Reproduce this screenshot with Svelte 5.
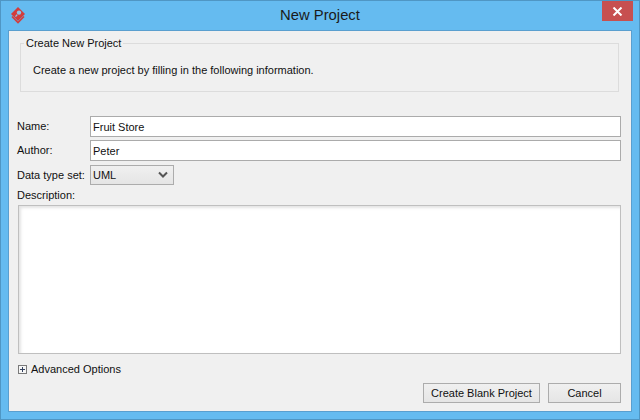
<script>
  let name = 'Fruit Store';
  let author = 'Peter';
</script>

<div class="window">
  <header class="titlebar">
    <svg class="logo" width="18" height="18" viewBox="0 0 18 18">
      <path d="M9 1 16 8 9 15 2 8Z" fill="#d23c3c"/>
      <path d="M3 10.5 9 16.5l6-6" fill="none" stroke="#d23c3c" stroke-width="1.6"/>
      <circle cx="10" cy="6.6" r="2.2" fill="#8fc4e8"/>
      <path d="M8.2 8.6 6.5 10.6" stroke="#8fc4e8" stroke-width="1.3"/>
    </svg>
    <h1>New Project</h1>
    <button class="close" aria-label="Close">
      <svg width="11" height="9" viewBox="0 0 11 9"><path d="M1.5 .5 9.5 8.5M9.5 .5 1.5 8.5" stroke="#fff" stroke-width="2"/></svg>
    </button>
  </header>
  <main class="panel">
    <fieldset class="group">
      <legend>Create New Project</legend>
      <p>Create a new project by filling in the following information.</p>
    </fieldset>
    <div class="row first">
      <label for="n">Name:</label>
      <input id="n" bind:value={name} />
    </div>
    <div class="row">
      <label for="a">Author:</label>
      <input id="a" bind:value={author} />
    </div>
    <div class="row third">
      <span class="lbl">Data type set:</span>
      <div class="combo">
        <span>UML</span>
        <svg width="10" height="7" viewBox="0 0 10 7"><path d="M1 1.5 5 5.5 9 1.5" fill="none" stroke="#555" stroke-width="2"/></svg>
      </div>
    </div>
    <div class="desc-label">Description:</div>
    <div class="textarea"></div>
    <div class="advanced">
      <span class="plus"></span>
      <span>Advanced Options</span>
    </div>
    <div class="actions">
      <button class="btn create">Create Blank Project</button>
      <button class="btn cancel">Cancel</button>
    </div>
  </main>
</div>

<style>
  :global(body) { margin: 0; }
  .window {
    box-sizing: border-box;
    width: 640px;
    height: 420px;
    background: #65bbf0;
    border: 1px solid #4f96c4;
    display: flex;
    flex-direction: column;
    font-family: "Liberation Sans", Arial, sans-serif;
    font-size: 11px;
    color: #111;
    overflow: hidden;
  }
  .titlebar {
    height: 29px;
    flex: none;
    display: flex;
    align-items: flex-start;
    position: relative;
  }
  .logo { margin: 5px 0 0 8px; flex: none; }
  h1 {
    position: absolute;
    left: 0; right: 0;
    top: 4px;
    margin: 0;
    text-align: center;
    font-size: 14.8px;
    font-weight: 400;
    line-height: 20px;
    color: #1a1a1a;
  }
  .close {
    position: absolute;
    left: 601px;
    top: 0;
    width: 31px;
    height: 20px;
    background: #c75050;
    border: 0;
    padding: 0;
    display: flex;
    align-items: center;
    justify-content: center;
  }
  .panel {
    flex: 1;
    margin: 0 7px 7px 7px;
    background: #f0f0f0;
    border: 1px solid #5a9fcf;
    padding: 0 10px 0 8px;
    display: flex;
    flex-direction: column;
    min-height: 0;
  }
  .group {
    box-sizing: border-box;
    margin: 5px 2px 0 3px;
    height: 56px;
    border: 1px solid #dcdcdc;
    padding: 0 0 0 12px;
    min-width: 0;
  }
  legend {
    padding: 0 2px;
    margin-left: -9px;
    line-height: 14px;
  }
  .group p { margin: 12px 0 0 0; line-height: 16px; }
  .row {
    display: flex;
    align-items: center;
    height: 21px;
    margin-top: 3px;
  }
  .row.first { margin-top: 24px; }
  .row label, .lbl { width: 73px; flex: none; white-space: nowrap; }
  .row label { transform: translateY(-1px); }
  input {
    box-sizing: border-box;
    width: 532px;
    height: 21px;
    border: 1px solid #ababab;
    background: #fff;
    padding: 0 2px;
    font: inherit;
    color: inherit;
    outline: none;
  }
  .combo {
    box-sizing: border-box;
    width: 84px;
    height: 20px;
    border: 1px solid #acacac;
    background: linear-gradient(#f0f0f0, #e5e5e5);
    display: flex;
    align-items: center;
    justify-content: space-between;
    padding: 0 5px 0 2px;
  }
  .desc-label { margin-top: 2px; line-height: 17px; }
  .textarea {
    box-sizing: border-box;
    height: 149px;
    width: 603px;
    margin: 1px 0 0 1px;
    background: #fff;
    border: 1px solid #bfbfbf;
    box-shadow: inset 2px 2px 3px #e4e4e4;
  }
  .advanced {
    display: flex;
    align-items: center;
    gap: 4px;
    margin-top: 7px;
    height: 16px;
    padding-left: 1px;
  }
  .plus {
    box-sizing: border-box;
    width: 9px;
    height: 9px;
    border: 1px solid #7a7a7a;
    background:
      linear-gradient(#33415f, #33415f) center / 5px 1px no-repeat,
      linear-gradient(#33415f, #33415f) center / 1px 5px no-repeat,
      #f6f6f6;
  }
  .actions {
    display: flex;
    justify-content: flex-end;
    gap: 8px;
    margin-top: 6px;
  }
  .btn {
    box-sizing: border-box;
    height: 20px;
    border: 1px solid #acacac;
    background: linear-gradient(#f0f0f0, #e5e5e5);
    font: inherit;
    color: inherit;
    padding: 0;
  }
  .create { width: 117px; }
  .cancel { width: 73px; }
</style>
